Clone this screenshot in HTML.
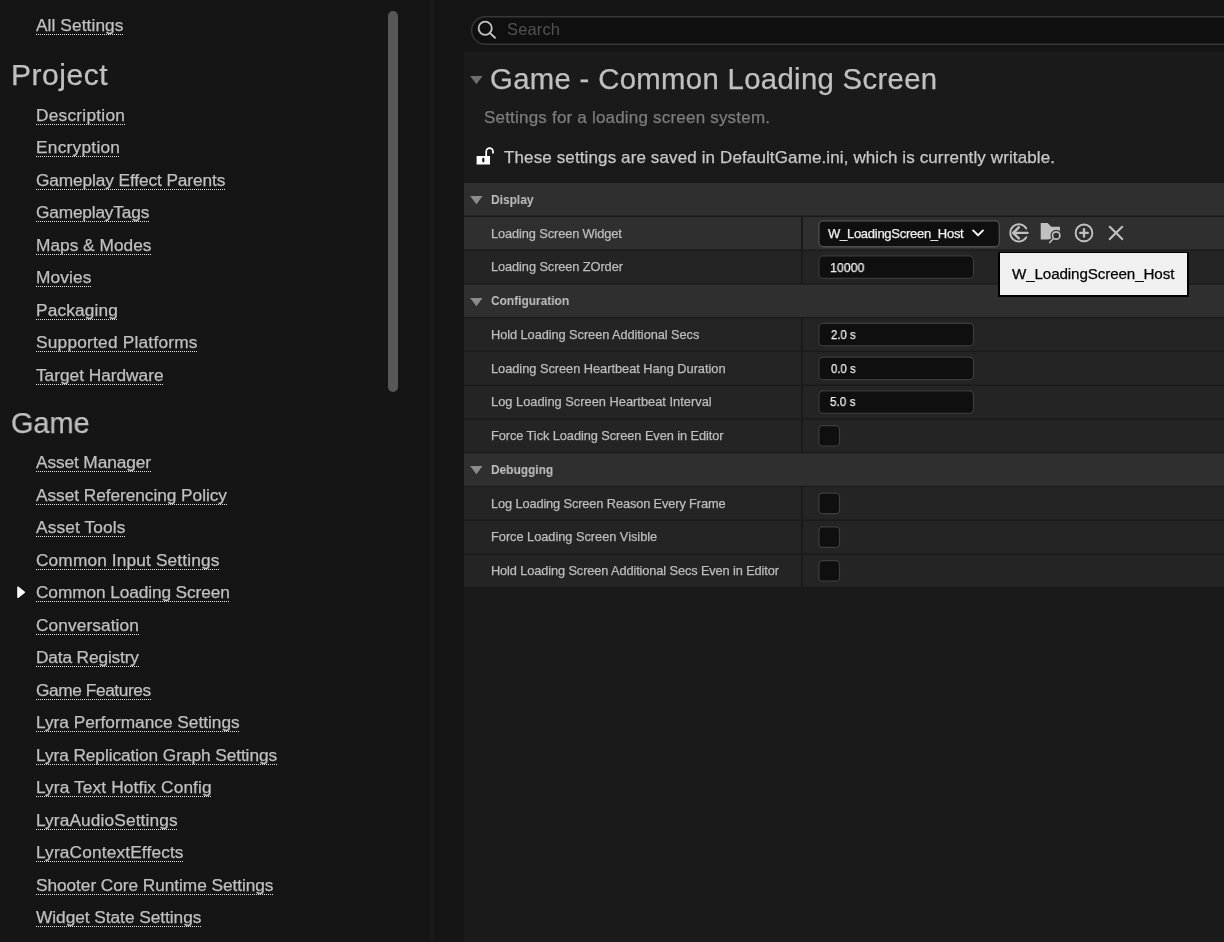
<!DOCTYPE html>
<html lang="en"><head><meta charset="utf-8"><title>Project Settings - Common Loading Screen</title>
<style>
html,body{margin:0;padding:0;background:#151515;}
body{width:1224px;height:942px;position:relative;overflow:hidden;font-family:"Liberation Sans", Arial, sans-serif;color:#c0c0c0;-webkit-font-smoothing:antialiased;}
.a{position:absolute;}
.t{position:absolute;white-space:nowrap;margin:0;padding:0;will-change:transform;-webkit-text-stroke:0.25px currentColor;}
.u{position:absolute;height:1px;background-image:repeating-linear-gradient(90deg,#e4e4e4 0,#e4e4e4 1px,transparent 1px,transparent 2px);}
.hdr{position:absolute;left:464px;right:0;background:#2f2f2f;}
.row{position:absolute;left:464px;right:0;background:#242424;}
.row.hov{background:#2a2a2a;}
.box{position:absolute;box-sizing:border-box;background:#0f0f0f;border:1px solid #383838;border-radius:4px;}
svg{position:absolute;overflow:visible;}
</style></head><body>

<div class="a" style="left:0;top:0;width:430px;height:942px;background:#151515"></div>
<div class="a" style="left:430px;top:0;width:4px;height:942px;background:#1a1a1a"></div>
<div class="a" style="left:388px;top:11px;width:10px;height:381px;border-radius:5px;background:#575757"></div>
<svg style="left:17px;top:586px" width="9" height="13" viewBox="0 0 9 13"><path d="M0.9 1.1 L7.5 6.2 L0.9 11.4 Z" fill="#ffffff" stroke="#ffffff" stroke-width="1.3" stroke-linejoin="round"/></svg>
<div class="a" style="left:464px;top:52px;width:760px;height:890px;background:#1a1a1a"></div>
<svg style="left:0;top:0" width="1224" height="60" viewBox="0 0 1224 60"><rect x="471.6" y="16.7" width="800" height="27.6" rx="13.8" fill="#0f0f0f" stroke="#373737" stroke-width="1.4"/></svg>
<svg style="left:476px;top:19px" width="22" height="22" viewBox="0 0 22 22"><circle cx="9.2" cy="9.3" r="6.6" fill="none" stroke="#c4c4c4" stroke-width="1.8"/><path d="M14 14.1 L19 18.8" stroke="#c4c4c4" stroke-width="1.9" stroke-linecap="round" fill="none"/></svg>
<svg style="left:469.6px;top:76px" width="13" height="9" viewBox="0 0 13 9"><path d="M0.2 0.1 H12.6 L6.4 8.3 Z" fill="#6e6e6e"/></svg>
<svg style="left:475px;top:146px" width="20" height="20" viewBox="0 0 20 20"><path d="M1.6 10 H15 V18.5 H1.6 Z M7.2 12.9 A1.1 1.1 0 0 1 9.4 12.9 V15.3 A1.1 1.1 0 0 1 7.2 15.3 Z" fill="#ffffff" fill-rule="evenodd"/><path d="M11.2 10 V5.6 A3.4 3.4 0 0 1 18 5.6 V7.6" fill="none" stroke="#ffffff" stroke-width="1.75"/></svg>
<svg style="left:0;top:0" width="1224" height="942" viewBox="0 0 1224 942"><rect x="464" y="183.00" width="760" height="32.50" fill="#2f2f2f"/><rect x="464" y="217.05" width="337.1" height="32.50" fill="#2f2f2f"/><rect x="802.9" y="217.05" width="421.1" height="32.50" fill="#2f2f2f"/><rect x="464" y="250.80" width="337.1" height="32.50" fill="#242424"/><rect x="802.9" y="250.80" width="421.1" height="32.50" fill="#242424"/><rect x="464" y="284.55" width="760" height="32.50" fill="#2f2f2f"/><rect x="464" y="318.30" width="337.1" height="32.50" fill="#242424"/><rect x="802.9" y="318.30" width="421.1" height="32.50" fill="#242424"/><rect x="464" y="352.05" width="337.1" height="32.50" fill="#242424"/><rect x="802.9" y="352.05" width="421.1" height="32.50" fill="#242424"/><rect x="464" y="385.80" width="337.1" height="32.50" fill="#242424"/><rect x="802.9" y="385.80" width="421.1" height="32.50" fill="#242424"/><rect x="464" y="419.55" width="337.1" height="32.50" fill="#242424"/><rect x="802.9" y="419.55" width="421.1" height="32.50" fill="#242424"/><rect x="464" y="453.30" width="760" height="32.50" fill="#2f2f2f"/><rect x="464" y="487.05" width="337.1" height="32.50" fill="#242424"/><rect x="802.9" y="487.05" width="421.1" height="32.50" fill="#242424"/><rect x="464" y="520.80" width="337.1" height="32.50" fill="#242424"/><rect x="802.9" y="520.80" width="421.1" height="32.50" fill="#242424"/><rect x="464" y="554.55" width="337.1" height="32.50" fill="#242424"/><rect x="802.9" y="554.55" width="421.1" height="32.50" fill="#242424"/></svg>
<svg style="left:469.6px;top:196.00px" width="13" height="9" viewBox="0 0 13 9"><path d="M0.2 0.1 H12.6 L6.4 8.3 Z" fill="#8c8c8c"/></svg>
<svg style="left:469.6px;top:298.00px" width="13" height="9" viewBox="0 0 13 9"><path d="M0.2 0.1 H12.6 L6.4 8.3 Z" fill="#8c8c8c"/></svg>
<svg style="left:469.6px;top:466.00px" width="13" height="9" viewBox="0 0 13 9"><path d="M0.2 0.1 H12.6 L6.4 8.3 Z" fill="#8c8c8c"/></svg>
<svg style="left:0;top:0" width="1224" height="942" viewBox="0 0 1224 942"><rect x="818.9" y="220.95" width="180.4" height="25.8" rx="4.4" fill="#0f0f0f" stroke="#505050" stroke-width="1.3"/><rect x="818.9" y="255.95" width="154.6" height="22.4" rx="4.2" fill="#0f0f0f" stroke="#3a3a3a" stroke-width="1.25"/><rect x="818.9" y="323.45" width="154.6" height="22.4" rx="4.2" fill="#0f0f0f" stroke="#3a3a3a" stroke-width="1.25"/><rect x="818.9" y="357.20" width="154.6" height="22.4" rx="4.2" fill="#0f0f0f" stroke="#3a3a3a" stroke-width="1.25"/><rect x="818.9" y="390.95" width="154.6" height="22.4" rx="4.2" fill="#0f0f0f" stroke="#3a3a3a" stroke-width="1.25"/><rect x="818.9" y="425.60" width="20.6" height="20.6" rx="3.7" fill="#0f0f0f" stroke="#3d3d3d" stroke-width="1.25"/><rect x="818.9" y="493.10" width="20.6" height="20.6" rx="3.7" fill="#0f0f0f" stroke="#3d3d3d" stroke-width="1.25"/><rect x="818.9" y="526.85" width="20.6" height="20.6" rx="3.7" fill="#0f0f0f" stroke="#3d3d3d" stroke-width="1.25"/><rect x="818.9" y="560.60" width="20.6" height="20.6" rx="3.7" fill="#0f0f0f" stroke="#3d3d3d" stroke-width="1.25"/></svg>
<svg style="left:972px;top:229px" width="13" height="9" viewBox="0 0 13 9"><path d="M1.1 1.35 L6.05 6.25 L11 1.35" fill="none" stroke="#ffffff" stroke-width="1.8" stroke-linecap="round" stroke-linejoin="round"/></svg>
<svg style="left:1008px;top:222px" width="22" height="22" viewBox="0 0 22 22"><path d="M18.3 6.5 A8.6 8.6 0 1 0 18.3 15.3" fill="none" stroke="#c0c0c0" stroke-width="1.9" stroke-linecap="round"/><path d="M19.6 10.9 H5.9" fill="none" stroke="#c0c0c0" stroke-width="2.3" stroke-linecap="round"/><path d="M10.8 5.4 L5.2 10.9 L10.8 16.4" fill="none" stroke="#c0c0c0" stroke-width="2.5" stroke-linecap="round" stroke-linejoin="round"/></svg>
<svg style="left:1040px;top:222px" width="24" height="24" viewBox="0 0 24 24"><path d="M0.7 1.1 H7.6 L11.3 4.8 H19.9 V17.6 H0.7 Z" fill="#c0c0c0"/><path d="M8 17.6 H21 V19 H8 Z" fill="#2f2f2f"/><path d="M13.4 16.3 L9.6 20.6" stroke="#2f2f2f" stroke-width="3.6" stroke-linecap="round"/><circle cx="16.2" cy="13.5" r="3.7" fill="#2f2f2f" stroke="#2f2f2f" stroke-width="4"/><circle cx="16.2" cy="13.5" r="3.7" fill="none" stroke="#c0c0c0" stroke-width="1.7"/><path d="M13.5 16.4 L9.7 20.6" stroke="#c0c0c0" stroke-width="1.5" stroke-linecap="round"/></svg>
<svg style="left:1073px;top:222px" width="22" height="22" viewBox="0 0 22 22"><circle cx="11" cy="10.9" r="8.4" fill="none" stroke="#c0c0c0" stroke-width="1.9"/><path d="M11 7.1 V14.7 M7.2 10.9 H14.8" stroke="#c0c0c0" stroke-width="2.3" stroke-linecap="round"/></svg>
<svg style="left:1108px;top:225px" width="16" height="16" viewBox="0 0 16 16"><path d="M1.8 1.8 L14.2 14 M14.2 1.8 L1.8 14" stroke="#c0c0c0" stroke-width="2.2" stroke-linecap="round"/></svg>
<div class="a" style="left:998px;top:252px;width:191px;height:45px;box-sizing:border-box;background:#f0f0f0;border:2px solid #000;border-top-width:1.5px;border-bottom-width:2.5px"></div>
<div class="u" style="left:36px;top:34.00px;width:87.0px"></div>
<div class="u" style="left:36px;top:124.00px;width:88.5px"></div>
<div class="u" style="left:36px;top:156.00px;width:83.0px"></div>
<div class="u" style="left:36px;top:189.00px;width:189.5px"></div>
<div class="u" style="left:36px;top:221.00px;width:113.5px"></div>
<div class="u" style="left:36px;top:254.00px;width:115.0px"></div>
<div class="u" style="left:36px;top:286.00px;width:55.5px"></div>
<div class="u" style="left:36px;top:319.00px;width:81.0px"></div>
<div class="u" style="left:36px;top:351.00px;width:161.0px"></div>
<div class="u" style="left:36px;top:384.00px;width:127.0px"></div>
<div class="u" style="left:36px;top:471.00px;width:115.5px"></div>
<div class="u" style="left:36px;top:504.00px;width:191.0px"></div>
<div class="u" style="left:36px;top:536.00px;width:89.5px"></div>
<div class="u" style="left:36px;top:569.00px;width:183.5px"></div>
<div class="u" style="left:36px;top:601.00px;width:193.0px"></div>
<div class="u" style="left:36px;top:634.00px;width:102.5px"></div>
<div class="u" style="left:36px;top:666.00px;width:103.0px"></div>
<div class="u" style="left:36px;top:699.00px;width:115.3px"></div>
<div class="u" style="left:36px;top:731.00px;width:203.4px"></div>
<div class="u" style="left:36px;top:764.00px;width:240.8px"></div>
<div class="u" style="left:36px;top:796.00px;width:174.8px"></div>
<div class="u" style="left:36px;top:829.00px;width:141.1px"></div>
<div class="u" style="left:36px;top:861.00px;width:147.0px"></div>
<div class="u" style="left:36px;top:894.00px;width:237.4px"></div>
<div class="u" style="left:36px;top:926.00px;width:165.5px"></div>
<div class="t" id="l0" style="left:35.70px;top:14.00px;font-size:17.3px;line-height:22px;font-weight:400;color:#c0c0c0;letter-spacing:0.088px;">All Settings</div>
<div class="t" id="l1" style="left:35.70px;top:104.00px;font-size:17.3px;line-height:22px;font-weight:400;color:#c0c0c0;letter-spacing:0.245px;">Description</div>
<div class="t" id="l2" style="left:35.70px;top:136.00px;font-size:17.3px;line-height:22px;font-weight:400;color:#c0c0c0;letter-spacing:0.257px;">Encryption</div>
<div class="t" id="l3" style="left:35.70px;top:169.00px;font-size:17.3px;line-height:22px;font-weight:400;color:#c0c0c0;letter-spacing:-0.111px;">Gameplay Effect Parents</div>
<div class="t" id="l4" style="left:35.70px;top:201.00px;font-size:17.3px;line-height:22px;font-weight:400;color:#c0c0c0;letter-spacing:-0.180px;">GameplayTags</div>
<div class="t" id="l5" style="left:35.70px;top:234.00px;font-size:17.3px;line-height:22px;font-weight:400;color:#c0c0c0;letter-spacing:0.013px;">Maps &amp; Modes</div>
<div class="t" id="l6" style="left:35.70px;top:266.00px;font-size:17.3px;line-height:22px;font-weight:400;color:#c0c0c0;letter-spacing:0.124px;">Movies</div>
<div class="t" id="l7" style="left:35.70px;top:299.00px;font-size:17.3px;line-height:22px;font-weight:400;color:#c0c0c0;letter-spacing:0.155px;">Packaging</div>
<div class="t" id="l8" style="left:35.70px;top:331.00px;font-size:17.3px;line-height:22px;font-weight:400;color:#c0c0c0;letter-spacing:0.219px;">Supported Platforms</div>
<div class="t" id="l9" style="left:35.70px;top:364.00px;font-size:17.3px;line-height:22px;font-weight:400;color:#c0c0c0;letter-spacing:-0.018px;">Target Hardware</div>
<div class="t" id="l10" style="left:35.70px;top:451.00px;font-size:17.3px;line-height:22px;font-weight:400;color:#c0c0c0;letter-spacing:-0.109px;">Asset Manager</div>
<div class="t" id="l11" style="left:35.70px;top:484.00px;font-size:17.3px;line-height:22px;font-weight:400;color:#c0c0c0;letter-spacing:-0.049px;">Asset Referencing Policy</div>
<div class="t" id="l12" style="left:35.70px;top:516.00px;font-size:17.3px;line-height:22px;font-weight:400;color:#c0c0c0;letter-spacing:0.135px;">Asset Tools</div>
<div class="t" id="l13" style="left:35.70px;top:549.00px;font-size:17.3px;line-height:22px;font-weight:400;color:#c0c0c0;letter-spacing:0.137px;">Common Input Settings</div>
<div class="t" id="l14" style="left:35.70px;top:581.00px;font-size:17.3px;line-height:22px;font-weight:400;color:#c0c0c0;letter-spacing:-0.106px;">Common Loading Screen</div>
<div class="t" id="l15" style="left:35.70px;top:614.00px;font-size:17.3px;line-height:22px;font-weight:400;color:#c0c0c0;letter-spacing:0.086px;">Conversation</div>
<div class="t" id="l16" style="left:35.70px;top:646.00px;font-size:17.3px;line-height:22px;font-weight:400;color:#c0c0c0;letter-spacing:-0.140px;">Data Registry</div>
<div class="t" id="l17" style="left:35.70px;top:679.00px;font-size:17.3px;line-height:22px;font-weight:400;color:#c0c0c0;letter-spacing:-0.409px;">Game Features</div>
<div class="t" id="l18" style="left:35.70px;top:711.00px;font-size:17.3px;line-height:22px;font-weight:400;color:#c0c0c0;letter-spacing:-0.013px;">Lyra Performance Settings</div>
<div class="t" id="l19" style="left:35.70px;top:744.00px;font-size:17.3px;line-height:22px;font-weight:400;color:#c0c0c0;letter-spacing:-0.075px;">Lyra Replication Graph Settings</div>
<div class="t" id="l20" style="left:35.70px;top:776.00px;font-size:17.3px;line-height:22px;font-weight:400;color:#c0c0c0;letter-spacing:0.124px;">Lyra Text Hotfix Config</div>
<div class="t" id="l21" style="left:35.70px;top:809.00px;font-size:17.3px;line-height:22px;font-weight:400;color:#c0c0c0;letter-spacing:0.120px;">LyraAudioSettings</div>
<div class="t" id="l22" style="left:35.70px;top:841.00px;font-size:17.3px;line-height:22px;font-weight:400;color:#c0c0c0;letter-spacing:0.145px;">LyraContextEffects</div>
<div class="t" id="l23" style="left:35.70px;top:874.00px;font-size:17.3px;line-height:22px;font-weight:400;color:#c0c0c0;letter-spacing:-0.062px;">Shooter Core Runtime Settings</div>
<div class="t" id="l24" style="left:35.70px;top:906.00px;font-size:17.3px;line-height:22px;font-weight:400;color:#c0c0c0;letter-spacing:-0.040px;">Widget State Settings</div>
<div class="t" id="hp" style="left:10.84px;top:55.00px;font-size:30px;line-height:39px;font-weight:400;color:#c0c0c0;letter-spacing:0.528px;">Project</div>
<div class="t" id="hg" style="left:11.03px;top:403.00px;font-size:30px;line-height:39px;font-weight:400;color:#c0c0c0;letter-spacing:0.000px;transform-origin:0 0;transform:scaleX(0.9628);">Game</div>
<div class="t" id="search" style="left:507.30px;top:18.00px;font-size:16.5px;line-height:22px;font-weight:400;color:#525252;letter-spacing:0.152px;-webkit-text-stroke:0;">Search</div>
<div class="t" id="title" style="left:489.71px;top:59.00px;font-size:29.3px;line-height:39px;font-weight:400;color:#c0c0c0;letter-spacing:0.337px;">Game - Common Loading Screen</div>
<div class="t" id="sub" style="left:484.00px;top:106.00px;font-size:17px;line-height:23px;font-weight:400;color:#7d7d7d;letter-spacing:0.201px;">Settings for a loading screen system.</div>
<div class="t" id="info" style="left:504.18px;top:146.00px;font-size:17px;line-height:23px;font-weight:400;color:#c8c8c8;letter-spacing:0.121px;">These settings are saved in DefaultGame.ini, which is currently writable.</div>
<div class="t" id="vh0" style="left:491.15px;top:191.00px;font-size:13.2px;line-height:17px;font-weight:700;color:#c0c0c0;letter-spacing:0.000px;-webkit-text-stroke:0;transform-origin:0 0;transform:scaleX(0.9076);">Display</div>
<div class="t" id="row1" style="left:490.90px;top:225.00px;font-size:12.8px;line-height:17px;font-weight:400;color:#bdbdbd;letter-spacing:-0.106px;">Loading Screen Widget</div>
<div class="t" id="row2" style="left:490.90px;top:258.00px;font-size:12.8px;line-height:17px;font-weight:400;color:#bdbdbd;letter-spacing:-0.090px;">Loading Screen ZOrder</div>
<div class="t" id="vh3" style="left:490.58px;top:292.00px;font-size:13.2px;line-height:17px;font-weight:700;color:#c0c0c0;letter-spacing:0.000px;-webkit-text-stroke:0;transform-origin:0 0;transform:scaleX(0.9032);">Configuration</div>
<div class="t" id="row4" style="left:490.90px;top:326.00px;font-size:12.8px;line-height:17px;font-weight:400;color:#bdbdbd;letter-spacing:-0.067px;">Hold Loading Screen Additional Secs</div>
<div class="t" id="row5" style="left:490.90px;top:360.00px;font-size:12.8px;line-height:17px;font-weight:400;color:#bdbdbd;letter-spacing:-0.026px;">Loading Screen Heartbeat Hang Duration</div>
<div class="t" id="row6" style="left:490.90px;top:393.00px;font-size:12.8px;line-height:17px;font-weight:400;color:#bdbdbd;letter-spacing:0.022px;">Log Loading Screen Heartbeat Interval</div>
<div class="t" id="row7" style="left:490.90px;top:427.00px;font-size:12.8px;line-height:17px;font-weight:400;color:#bdbdbd;letter-spacing:-0.073px;">Force Tick Loading Screen Even in Editor</div>
<div class="t" id="vh8" style="left:491.15px;top:461.00px;font-size:13.2px;line-height:17px;font-weight:700;color:#c0c0c0;letter-spacing:0.000px;-webkit-text-stroke:0;transform-origin:0 0;transform:scaleX(0.9032);">Debugging</div>
<div class="t" id="row9" style="left:490.90px;top:495.00px;font-size:12.8px;line-height:17px;font-weight:400;color:#bdbdbd;letter-spacing:-0.123px;">Log Loading Screen Reason Every Frame</div>
<div class="t" id="row10" style="left:490.90px;top:528.00px;font-size:12.8px;line-height:17px;font-weight:400;color:#bdbdbd;letter-spacing:-0.029px;">Force Loading Screen Visible</div>
<div class="t" id="row11" style="left:490.90px;top:562.00px;font-size:12.8px;line-height:17px;font-weight:400;color:#bdbdbd;letter-spacing:-0.118px;">Hold Loading Screen Additional Secs Even in Editor</div>
<div class="t" id="combo" style="left:828.43px;top:225.00px;font-size:13px;line-height:17px;font-weight:400;color:#f0f0f0;letter-spacing:-0.273px;">W_LoadingScreen_Host</div>
<div class="t" id="v10000" style="left:830.08px;top:259.00px;font-size:13px;line-height:17px;font-weight:400;color:#f0f0f0;letter-spacing:0.000px;transform-origin:0 0;transform:scaleX(0.9502);">10000</div>
<div class="t" id="v2" style="left:830.82px;top:326.00px;font-size:13px;line-height:17px;font-weight:400;color:#f0f0f0;letter-spacing:0.000px;transform-origin:0 0;transform:scaleX(0.8739);">2.0 s</div>
<div class="t" id="v0" style="left:830.63px;top:360.00px;font-size:13px;line-height:17px;font-weight:400;color:#f0f0f0;letter-spacing:0.000px;transform-origin:0 0;transform:scaleX(0.8740);">0.0 s</div>
<div class="t" id="v5" style="left:830.30px;top:393.00px;font-size:13px;line-height:17px;font-weight:400;color:#f0f0f0;letter-spacing:0.000px;transform-origin:0 0;transform:scaleX(0.9029);">5.0 s</div>
<div class="t" id="tip" style="left:1011.80px;top:263.00px;font-size:15.2px;line-height:21px;font-weight:400;color:#000;letter-spacing:-0.118px;">W_LoadingScreen_Host</div>
</body></html>
